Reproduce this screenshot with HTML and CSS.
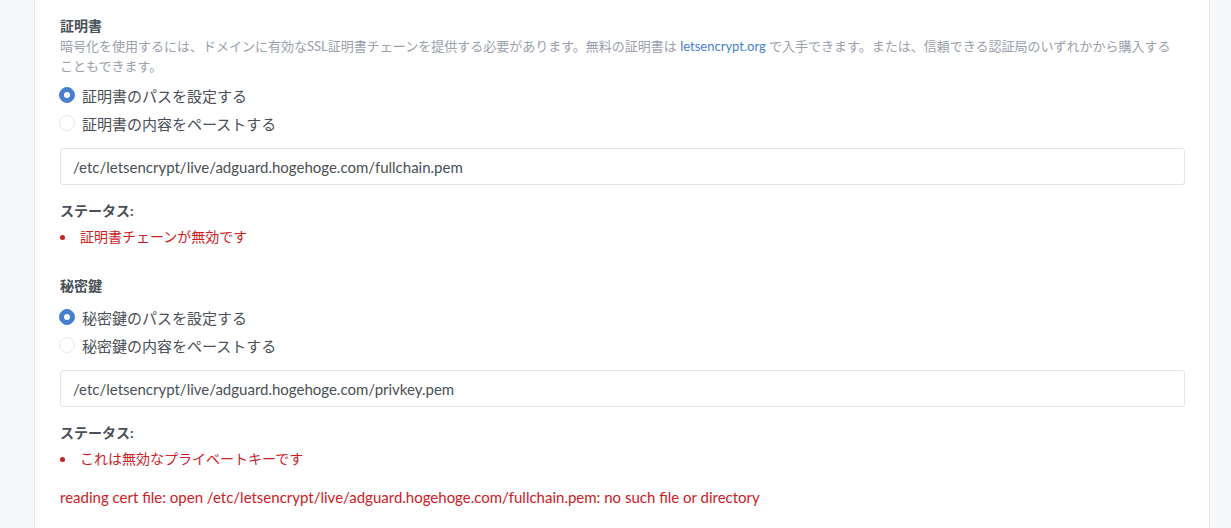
FILE: index.html
```html
<!DOCTYPE html>
<html lang="ja">
<head>
<meta charset="utf-8">
<title>証明書</title>
<link rel="stylesheet" href="styles.css">
</head>
<body>
<div class="card">
  <section class="block">
    <div class="label">証明書</div>
    <div class="desc">暗号化を使用するには、ドメインに有効なSSL証明書チェーンを提供する必要があります。無料の証明書は <a class="link" href="#">letsencrypt.org</a> で入手できます。または、信頼できる認証局のいずれかから購入することもできます。</div>
    <div class="radios">
      <label class="radio"><span class="dot checked"></span><span>証明書のパスを設定する</span></label>
      <label class="radio"><span class="dot"></span><span>証明書の内容をペーストする</span></label>
    </div>
    <div class="input">/etc/letsencrypt/live/adguard.hogehoge.com/fullchain.pem</div>
    <div class="status">ステータス:</div>
    <ul class="errors"><li>証明書チェーンが無効です</li></ul>
  </section>
  <section class="block second">
    <div class="label">秘密鍵</div>
    <div class="radios tight">
      <label class="radio"><span class="dot checked"></span><span>秘密鍵のパスを設定する</span></label>
      <label class="radio"><span class="dot"></span><span>秘密鍵の内容をペーストする</span></label>
    </div>
    <div class="input">/etc/letsencrypt/live/adguard.hogehoge.com/privkey.pem</div>
    <div class="status">ステータス:</div>
    <ul class="errors"><li>これは無効なプライベートキーです</li></ul>
  </section>
  <div class="error-msg">reading cert file: open /etc/letsencrypt/live/adguard.hogehoge.com/fullchain.pem: no such file or directory</div>
</div>
</body>
</html>
```
FILE: styles.css
```css
html, body {
  margin: 0;
  padding: 0;
}
body {
  background: #f5f7fb;
  font-family: "Lato", "Noto Sans CJK JP", sans-serif;
  color: #495057;
  height: 528px;
  overflow: hidden;
}
.card {
  margin: -1px 0 0 34px;
  width: 1125px;
  height: 600px;
  background: #fff;
  border: 1px solid #e3e6ec;
  padding: 16px 24px 0 25px;
  box-sizing: content-box;
}
.label {
  font-size: 14px;
  font-weight: 700;
  line-height: 20px;
  color: #495057;
}
.desc {
  font-size: 13px;
  line-height: 20px;
  color: #9aa0ac;
  padding-right: 10px;
}
.link {
  color: #467fcf;
  text-decoration: none;
}
.radios {
  margin-top: 5px;
  display: flex;
  flex-direction: column;
}
.radios.tight {
  margin-top: 7px;
}
.radio {
  display: flex;
  align-items: center;
  gap: 7px;
  height: 28px;
  font-size: 15px;
}
.dot {
  width: 16px;
  height: 16px;
  margin-left: -1px;
  border-radius: 50%;
  box-sizing: border-box;
  border: 1px solid #e6e9ee;
  background: #fff;
  flex: none;
  display: flex;
  align-items: center;
  justify-content: center;
}
.dot.checked {
  background: #467fcf;
  border-color: #467fcf;
}
.dot.checked::after {
  content: "";
  width: 6px;
  height: 6px;
  border-radius: 50%;
  background: #fff;
}
.input {
  margin-top: 11px;
  height: 37px;
  box-sizing: border-box;
  border: 1px solid #e0e5ec;
  border-radius: 3px;
  padding: 0 12px;
  display: flex;
  align-items: center;
  font-size: 15px;
  color: #495057;
}
.status {
  margin-top: 16px;
  font-size: 14px;
  font-weight: 700;
  line-height: 20px;
}
.errors {
  list-style: none;
  margin: 6px 0 0;
  padding: 0;
  font-size: 14px;
  line-height: 20px;
  color: #cd201f;
}
.errors li {
  display: flex;
  align-items: center;
}
.errors li::before {
  content: "";
  width: 5px;
  height: 5px;
  border-radius: 50%;
  background: #cd201f;
  margin: 0 15px 0 0;
  flex: none;
}
.second {
  margin-top: 29px;
}
.error-msg {
  margin-top: 18px;
  font-size: 15px;
  line-height: 20px;
  color: #cd201f;
}
```
